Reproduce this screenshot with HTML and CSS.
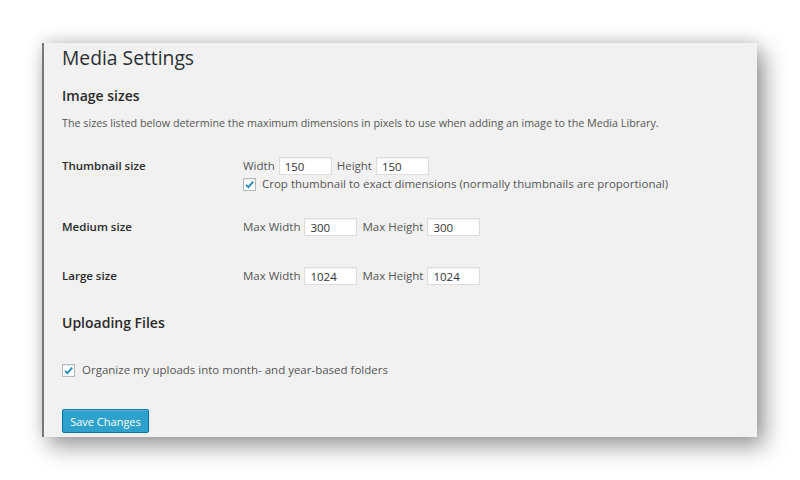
FILE: index.html
```html
<!DOCTYPE html>
<html lang="en">
<head>
    <meta charset="UTF-8">
    <title>Media Settings</title>
    <link rel="stylesheet" href="styles.css">
</head>
<body>
    <div class="wrap">
        <h1>Media Settings</h1>

        <h2 class="section-title">Image sizes</h2>
        <p class="intro">The sizes listed below determine the maximum dimensions in pixels to use when adding an image to the Media Library.</p>

        <div class="size-row thumb-row">
            <div class="row-label">Thumbnail size</div>
            <div class="row-fields">
                <div class="field-line">
                    <span class="field-name">Width</span>
                    <input class="num" type="text" value="150">
                    <span class="field-name">Height</span>
                    <input class="num" type="text" value="150">
                </div>
                <label class="check-line">
                    <span class="checkbox"><svg viewBox="0 0 13 13" width="13" height="13"><path d="M3 6.8 L5.4 9.2 L10.2 3.6" /></svg></span>
                    Crop thumbnail to exact dimensions (normally thumbnails are proportional)
                </label>
            </div>
        </div>

        <div class="size-row medium-row">
            <div class="row-label">Medium size</div>
            <div class="row-fields">
                <div class="field-line">
                    <span class="field-name">Max Width</span>
                    <input class="num" type="text" value="300">
                    <span class="field-name">Max Height</span>
                    <input class="num" type="text" value="300">
                </div>
            </div>
        </div>

        <div class="size-row large-row">
            <div class="row-label">Large size</div>
            <div class="row-fields">
                <div class="field-line">
                    <span class="field-name">Max Width</span>
                    <input class="num" type="text" value="1024">
                    <span class="field-name">Max Height</span>
                    <input class="num" type="text" value="1024">
                </div>
            </div>
        </div>

        <h2 class="section-title uploads-title">Uploading Files</h2>

        <label class="check-line uploads-check">
            <span class="checkbox"><svg viewBox="0 0 13 13" width="13" height="13"><path d="M3 6.8 L5.4 9.2 L10.2 3.6" /></svg></span>
            Organize my uploads into month- and year-based folders
        </label>

        <button class="save-btn">Save Changes</button>
    </div>
</body>
</html>
```

FILE: styles.css
```css
body {
    box-sizing: border-box;
    margin: 0;
    min-height: 480px;
    padding: 43px 0 43px 42px;
    background: #fff;
    font-family: "Open Sans", "Liberation Sans", sans-serif;
    color: #444;
}
.wrap {
    box-sizing: border-box;
    width: 715px;
    height: 394px;
    padding: 1px 0 0 18px;
    background: #f1f1f1;
    border-left: 2px solid #777;
    box-shadow: 7px 9px 22px rgba(0, 0, 0, 0.42), 0 -4px 12px rgba(0, 0, 0, 0.1);
}
h1 {
    margin: 0;
    font-size: 19.3px;
    line-height: 28px;
    font-weight: 400;
    color: #2b2f33;
}
.section-title {
    margin: 14px 0 0;
    font-size: 14px;
    line-height: 20px;
    font-weight: 600;
    color: #2a2a2a;
}
.intro {
    margin: 9px 0 0;
    font-size: 10.75px;
    line-height: 16px;
    color: #555;
}
.size-row {
    display: flex;
    font-size: 11.5px;
    line-height: 18px;
}
.thumb-row {
    margin-top: 26px;
}
.medium-row {
    margin-top: 25px;
}
.large-row {
    margin-top: 31px;
}
.row-label {
    width: 181px;
    flex-shrink: 0;
    font-weight: 600;
    color: #2a2a2a;
}
.field-line {
    display: flex;
    align-items: center;
    height: 18px;
}
.field-name {
    margin-right: 4px;
    color: #555;
}
.num {
    box-sizing: border-box;
    width: 53px;
    height: 18px;
    margin: 0 5px 0 0;
    padding: 0 5px;
    border: 1px solid #ddd;
    background: #fff;
    box-shadow: inset 0 1px 2px rgba(0, 0, 0, 0.07);
    font-family: inherit;
    font-size: 11.5px;
    color: #333;
    outline: none;
}
.check-line {
    display: flex;
    align-items: center;
    font-size: 11.5px;
    line-height: 18px;
    color: #555;
}
.checkbox {
    box-sizing: border-box;
    width: 13px;
    height: 13px;
    margin-right: 6px;
    border: 1px solid #b4b9be;
    background: #fff;
    box-shadow: inset 0 1px 2px rgba(0, 0, 0, 0.1);
    display: flex;
}
.checkbox svg {
    margin: -1px;
}
.checkbox path {
    fill: none;
    stroke: #1e8cbe;
    stroke-width: 1.8;
}
.uploads-title {
    margin-top: 28px;
}
.uploads-check {
    margin-top: 28px;
}
.uploads-check .checkbox {
    margin-right: 7px;
}
.save-btn {
    display: block;
    box-sizing: border-box;
    margin-top: 30px;
    width: 87px;
    height: 24px;
    padding: 0;
    border: 1px solid #0074a2;
    border-radius: 2px;
    background: #2ea2cc;
    box-shadow: inset 0 1px 0 rgba(120, 200, 230, 0.5);
    color: #fff;
    font-family: inherit;
    font-size: 11px;
}
```
